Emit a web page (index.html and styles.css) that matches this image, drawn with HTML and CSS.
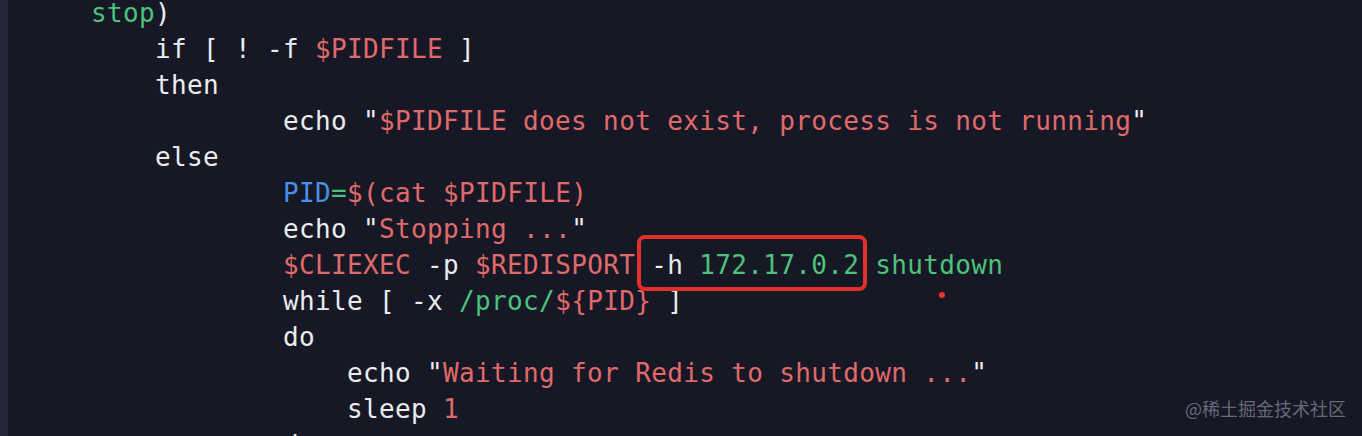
FILE: index.html
```html
<!DOCTYPE html>
<html lang="zh">
<head>
<meta charset="utf-8">
<title>redis stop script</title>
<link rel="stylesheet" href="styles.css">
</head>
<body>
<div class="frame">
  <pre class="code"><code>    <span class="g">stop</span>)
        if [ ! -f <span class="r">$PIDFILE</span> ]
        then
                echo "<span class="r">$PIDFILE does not exist, process is not running</span>"
        else
                <span class="b">PID</span><span class="g">=</span><span class="r">$(cat $PIDFILE)</span>
                echo "<span class="r">Stopping ...</span>"
                <span class="r">$CLIEXEC</span> -p <span class="r">$REDISPORT</span> <span class="mark">-h <span class="g">172.17.0.2</span></span> <span class="g">shutdown</span>
                while [ -x <span class="g">/proc/</span><span class="r">${PID}</span> ]
                do
                    echo "<span class="r">Waiting for Redis to shutdown ...</span>"
                    sleep <span class="r">1</span>
                done</code></pre>
  <span class="dot"></span>
  <span class="watermark">@稀土掘金技术社区</span>
</div>
</body>
</html>
```
FILE: styles.css
```css
html, body {
  margin: 0;
  padding: 0;
  background: #161826;
  overflow: hidden;
}
.frame {
  position: relative;
  width: 1362px;
  height: 436px;
  box-sizing: border-box;
  border-left: 8px solid #252738;
  background: #161826;
  overflow: hidden;
}
.code {
  margin: -5px 0 0 19px;
  padding: 0;
  font-family: "DejaVu Sans Mono", monospace;
  font-size: 26px;
  letter-spacing: 0.35px;
  line-height: 36px;
  color: #ececef;
}
.code code {
  font-family: inherit;
}
.g { color: #4cc27a; }
.r { color: #e06a6a; }
.b { color: #4a8fe6; }
.mark {
  position: relative;
}
.mark::before {
  content: "";
  position: absolute;
  left: -14px;
  right: -8px;
  top: -15px;
  bottom: -11px;
  border: 4px solid #e2302a;
  border-radius: 8px;
}
.dot {
  position: absolute;
  left: 931px;
  top: 292px;
  width: 6px;
  height: 6px;
  border-radius: 50%;
  background: #ee3526;
}
.watermark {
  position: absolute;
  right: 16px;
  top: 397px;
  font-family: "Noto Sans CJK SC", "Noto Sans", sans-serif;
  font-size: 18px;
  line-height: 22px;
  color: #676978;
}
```
